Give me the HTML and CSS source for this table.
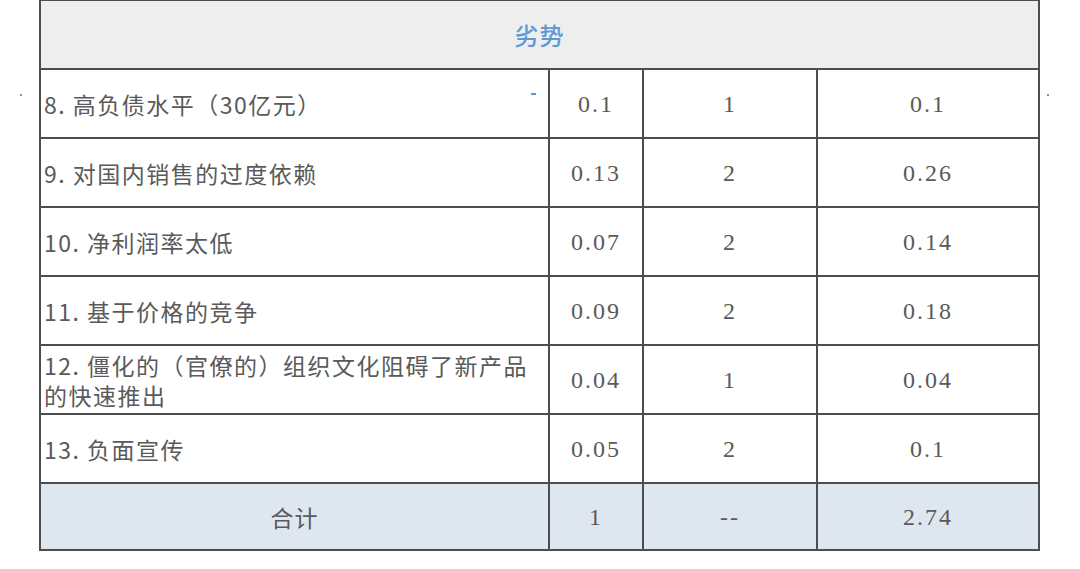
FILE: index.html
```html
<!DOCTYPE html>
<html lang="zh">
<head>
<meta charset="utf-8">
<title>劣势</title>
<link rel="stylesheet" href="styles.css">
</head>
<body>
<div class="page">
  <span class="mark dot-left"></span>
  <span class="mark dash-mid"></span>
  <span class="mark dot-right"></span>
  <table class="grid">
    <colgroup>
      <col class="c1"><col class="c2"><col class="c3"><col class="c4">
    </colgroup>
    <thead>
      <tr><th colspan="4" class="title">劣势</th></tr>
    </thead>
    <tbody>
      <tr><td class="name">8. 高负债水平（30亿元）</td><td>0.1</td><td>1</td><td>0.1</td></tr>
      <tr><td class="name">9. 对国内销售的过度依赖</td><td>0.13</td><td>2</td><td>0.26</td></tr>
      <tr><td class="name">10. 净利润率太低</td><td>0.07</td><td>2</td><td>0.14</td></tr>
      <tr><td class="name">11. 基于价格的竞争</td><td>0.09</td><td>2</td><td>0.18</td></tr>
      <tr><td class="name">12. 僵化的（官僚的）组织文化阻碍了新产品的快速推出</td><td>0.04</td><td>1</td><td>0.04</td></tr>
      <tr><td class="name">13. 负面宣传</td><td>0.05</td><td>2</td><td>0.1</td></tr>
      <tr class="total"><td class="sum">合计</td><td>1</td><td>--</td><td>2.74</td></tr>
    </tbody>
  </table>
</div>
</body>
</html>
```

FILE: styles.css
```css
html, body {
  margin: 0;
  padding: 0;
  background: #ffffff;
}

.page {
  position: relative;
  padding-left: 39px;
  width: 1041px;
}

.grid {
  border-collapse: collapse;
  table-layout: fixed;
  width: 999px;
  margin-top: -1px;
  font-family: "Liberation Serif", "Noto Sans CJK SC", serif;
  font-size: 24px;
  letter-spacing: 2px;
  color: #5a5a5a;
}

.c1 { width: 509px; }
.c2 { width: 94px; }
.c3 { width: 174px; }
.c4 { width: 222px; }

.grid th,
.grid td {
  border: 2px solid #4d4d4d;
  padding: 0;
  height: 67px;
  text-align: center;
  vertical-align: middle;
  line-height: 30px;
}

.grid th.title {
  background: #eeeeee;
  color: #5b9bd5;
  font-family: "Noto Sans CJK SC", sans-serif;
  font-weight: 500;
  font-size: 24px;
  letter-spacing: 1px;
  height: 67px;
}

.grid td.name {
  font-family: "Noto Sans CJK SC", sans-serif;
  font-size: 23px;
  letter-spacing: 1.5px;
  text-align: left;
  padding-left: 3px;
  padding-right: 14px;
}

.grid td.sum {
  font-family: "Noto Sans CJK SC", sans-serif;
  font-size: 23px;
  letter-spacing: 1px;
}

.total td {
  background: #dee6ef;
  height: 65px;
}

.mark {
  position: absolute;
  background: #5b9bd5;
}

.dot-left {
  left: 20px;
  top: 95px;
  width: 2px;
  height: 2px;
}

.dash-mid {
  left: 531px;
  top: 94px;
  width: 5px;
  height: 2px;
}

.dot-right {
  left: 1047px;
  top: 95px;
  width: 2px;
  height: 2px;
}
```
